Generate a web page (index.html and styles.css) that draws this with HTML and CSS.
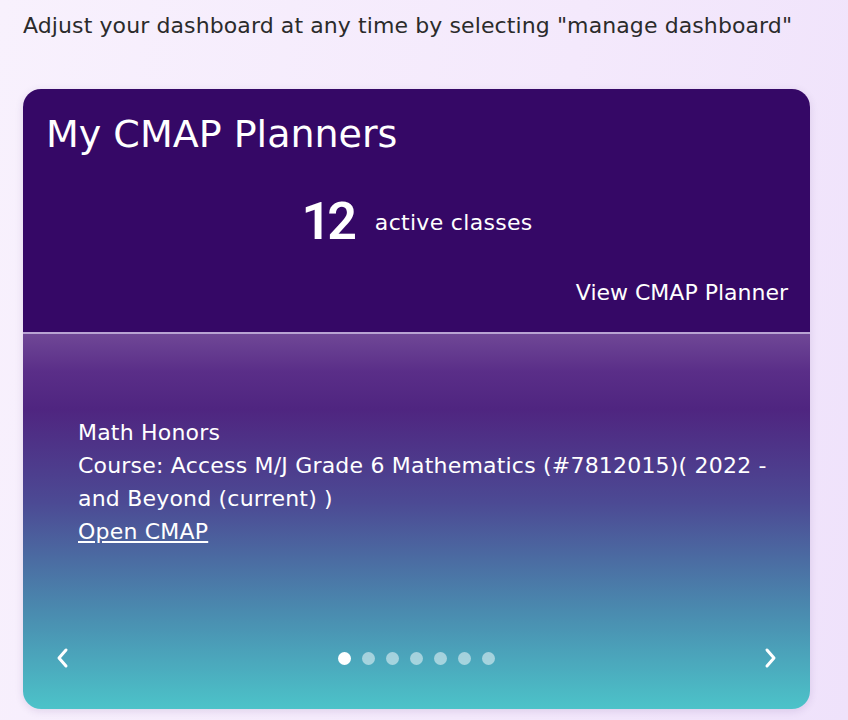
FILE: index.html
```html
<!DOCTYPE html>
<html lang="en">
<head>
  <meta charset="UTF-8">
  <meta name="viewport" content="width=device-width, initial-scale=1.0">
  <title>Dashboard | CMAP Planners</title>
  <link rel="stylesheet" href="styles.css">
</head>
<body>

  <div class="page">
    <p class="hint">Adjust your dashboard at any time by selecting "manage dashboard"</p>

    <div class="cmap-card">
      <div class="card-top">
        <h2 class="card-title">My CMAP Planners</h2>
        <div class="count-row">
          <span class="count-number">12</span>
          <span class="count-label">active classes</span>
        </div>
        <a href="#" class="view-link">View CMAP Planner</a>
      </div>

      <div class="card-slider">
        <div class="slide">
          <p>Math Honors</p>
          <p>Course: Access M/J Grade 6 Mathematics (#7812015)( 2022&nbsp;- and Beyond (current) )</p>
          <a href="#" class="open-link">Open CMAP</a>
        </div>

        <div class="slider-nav">
          <button class="arrow" aria-label="previous">
            <svg width="14" height="22" viewBox="0 0 14 22"><path d="M11 3 L4 11 L11 19" fill="none" stroke="white" stroke-width="3" stroke-linecap="round" stroke-linejoin="round"/></svg>
          </button>
          <div class="dots">
            <span class="dot active"></span>
            <span class="dot"></span>
            <span class="dot"></span>
            <span class="dot"></span>
            <span class="dot"></span>
            <span class="dot"></span>
            <span class="dot"></span>
          </div>
          <button class="arrow" aria-label="next">
            <svg width="14" height="22" viewBox="0 0 14 22"><path d="M3 3 L10 11 L3 19" fill="none" stroke="white" stroke-width="3" stroke-linecap="round" stroke-linejoin="round"/></svg>
          </button>
        </div>
      </div>
    </div>
  </div>

</body>
</html>
```

FILE: styles.css
```css
*{
  margin: 0;
  padding: 0;
  box-sizing: border-box;
}

body{
  font-family: "DejaVu Sans", sans-serif;
  min-height: 100vh;
  background: linear-gradient(100deg, #f8f1fd 0%, #f4e9fc 60%, #efe2fb 100%);
  color: #2a2a2a;
  overflow: hidden;
}

.page{
  padding: 10px 38px 0 23px;
}

.hint{
  font-size: 22px;
  line-height: 32px;
  letter-spacing: 0.1px;
  color: #2b2b2b;
}

.cmap-card{
  margin-top: 47px;
  border-radius: 18px;
  overflow: hidden;
  box-shadow: 0 2px 8px rgba(60, 20, 100, 0.12);
}

.card-top{
  background-color: #350866;
  color: white;
  padding: 20px 22px 27px 23px;
  display: flex;
  flex-direction: column;
  border-bottom: 2px solid #b8a3d3;
}

.card-title{
  font-size: 38px;
  font-weight: 400;
  line-height: 50px;
}

.count-row{
  display: flex;
  align-items: center;
  justify-content: center;
  column-gap: 22px;
  margin-top: 36px;
}

.count-number{
  font-family: Roboto, sans-serif;
  font-size: 52px;
  font-weight: 600;
  letter-spacing: -4px;
  line-height: 54px;
}

.count-label{
  font-size: 22px;
  letter-spacing: 0.3px;
}

.view-link{
  align-self: flex-end;
  color: white;
  text-decoration: none;
  font-size: 22px;
  line-height: 24px;
  margin-top: 32px;
}

.card-slider{
  background: linear-gradient(180deg, #6f4796 0%, #5a2e88 10%, #4f2580 20%, #4c4a94 45%, #4a8db0 75%, #4cc3c9 100%);
  color: white;
  padding: 82px 40px 36px 55px;
}

.slide p, .open-link{
  font-size: 22px;
  line-height: 33px;
  letter-spacing: 0.2px;
}

.open-link{
  color: white;
  text-decoration: underline;
}

.slider-nav{
  display: flex;
  align-items: center;
  justify-content: space-between;
  margin: 95px -16px 0 -31px;
}

.arrow{
  background: none;
  border: none;
  cursor: pointer;
  display: grid;
  place-content: center;
  width: 30px;
  height: 30px;
}

.dots{
  display: flex;
  column-gap: 11px;
}

.dot{
  width: 13px;
  height: 13px;
  border-radius: 100vw;
  background-color: rgba(255, 255, 255, 0.5);
}

.dot.active{
  background-color: white;
}
```
